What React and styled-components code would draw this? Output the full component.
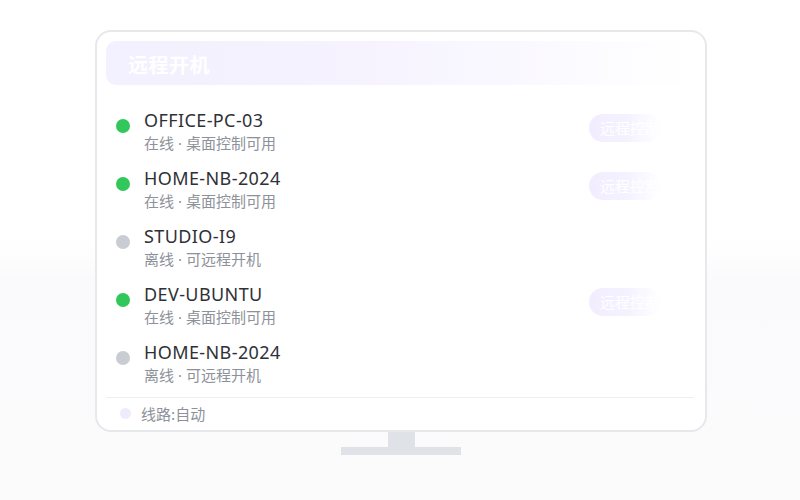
import React from 'react';
import styled, { createGlobalStyle } from 'styled-components';

const GlobalStyle = createGlobalStyle`
  html, body {
    margin: 0;
    padding: 0;
  }
  body {
    width: 800px;
    height: 500px;
    overflow: hidden;
    background: linear-gradient(180deg, #ffffff 0%, #ffffff 48%, #fafafc 56%, #fbfbfc 100%);
    font-family: 'Noto Sans', 'Noto Sans CJK SC', sans-serif;
  }
`;

const Page = styled.div`
  display: flex;
  flex-direction: column;
  align-items: center;
  padding-top: 30px;
  padding-left: 2px;
`;

const Monitor = styled.div`
  box-sizing: border-box;
  width: 612px;
  height: 402px;
  border: 2px solid #e6e8ec;
  border-radius: 16px;
  background: #ffffff;
  padding: 9px 10px 0 9px;
  display: flex;
  flex-direction: column;
`;

const Header = styled.div`
  box-sizing: border-box;
  height: 46px;
  border-radius: 10px;
  background: linear-gradient(90deg, #f3f0ff 0%, #f6f3ff 45%, #ffffff 100%);
  display: flex;
  align-items: center;
  padding: 3px 0 0 22px;
  color: #ffffff;
  font-family: 'Noto Sans CJK SC', sans-serif;
  font-size: 20px;
  font-weight: 700;
  letter-spacing: 0.5px;
`;

const List = styled.div`
  display: flex;
  flex-direction: column;
  padding-top: 22px;
  flex: 1;
`;

const Row = styled.div`
  height: 58px;
  display: flex;
  align-items: flex-start;
  padding-left: 10px;
  padding-right: 34px;
`;

const Dot = styled.span`
  width: 14px;
  height: 14px;
  border-radius: 50%;
  background: ${p => (p.$online ? '#31c75a' : '#c9ccd3')};
  margin-top: 12px;
  flex-shrink: 0;
`;

const Info = styled.div`
  display: flex;
  flex-direction: column;
  margin-left: 14px;
  flex: 1;
`;

const Name = styled.div`
  font-family: 'Noto Sans', 'Noto Sans CJK SC', sans-serif;
  font-size: 18px;
  line-height: 26px;
  color: #2f3137;
  letter-spacing: 0.4px;
`;

const Sub = styled.div`
  font-family: 'Noto Sans CJK SC', sans-serif;
  font-size: 15px;
  line-height: 20px;
  color: #8d919a;
`;

const Sep = styled.span`
  font-family: 'Noto Sans', sans-serif;
  margin: 0 4px;
`;

const ControlButton = styled.div`
  margin-top: 7px;
  width: 72px;
  height: 28px;
  border-radius: 14px;
  background: linear-gradient(90deg, #f1edff 0%, #f5f2ff 55%, #ffffff 100%);
  color: #ffffff;
  font-family: 'Noto Sans CJK SC', sans-serif;
  font-size: 15px;
  line-height: 28px;
  padding-left: 11px;
  box-sizing: border-box;
  white-space: nowrap;
  overflow: hidden;
`;

const Footer = styled.div`
  margin-top: auto;
  height: 34px;
  border-top: 1px solid #eceef2;
  display: flex;
  align-items: center;
  padding-left: 14px;
  margin-right: 1px;
`;

const RouteDot = styled.span`
  width: 11px;
  height: 11px;
  border-radius: 50%;
  background: #efebfd;
`;

const RouteText = styled.span`
  margin-left: 10px;
  font-family: 'Noto Sans CJK SC', sans-serif;
  font-size: 15px;
  color: #8d919a;
`;

const Neck = styled.div`
  width: 27px;
  height: 15px;
  background: #dfe2e7;
`;

const Base = styled.div`
  width: 120px;
  height: 8px;
  background: #dfe2e7;
`;

const devices = [
  { name: 'OFFICE-PC-03', online: true },
  { name: 'HOME-NB-2024', online: true },
  { name: 'STUDIO-I9', online: false },
  { name: 'DEV-UBUNTU', online: true },
  { name: 'HOME-NB-2024', online: false },
];

export default function App() {
  return (
    <>
      <GlobalStyle />
      <Page>
        <Monitor>
          <Header>远程开机</Header>
          <List>
            {devices.map((d, i) => (
              <Row key={i}>
                <Dot $online={d.online} />
                <Info>
                  <Name>{d.name}</Name>
                  <Sub>
                    {d.online ? '在线' : '离线'}
                    <Sep>·</Sep>
                    {d.online ? '桌面控制可用' : '可远程开机'}
                  </Sub>
                </Info>
                {d.online && <ControlButton>远程控制</ControlButton>}
              </Row>
            ))}
          </List>
          <Footer>
            <RouteDot />
            <RouteText>线路:自动</RouteText>
          </Footer>
        </Monitor>
        <Neck />
        <Base />
      </Page>
    </>
  );
}
